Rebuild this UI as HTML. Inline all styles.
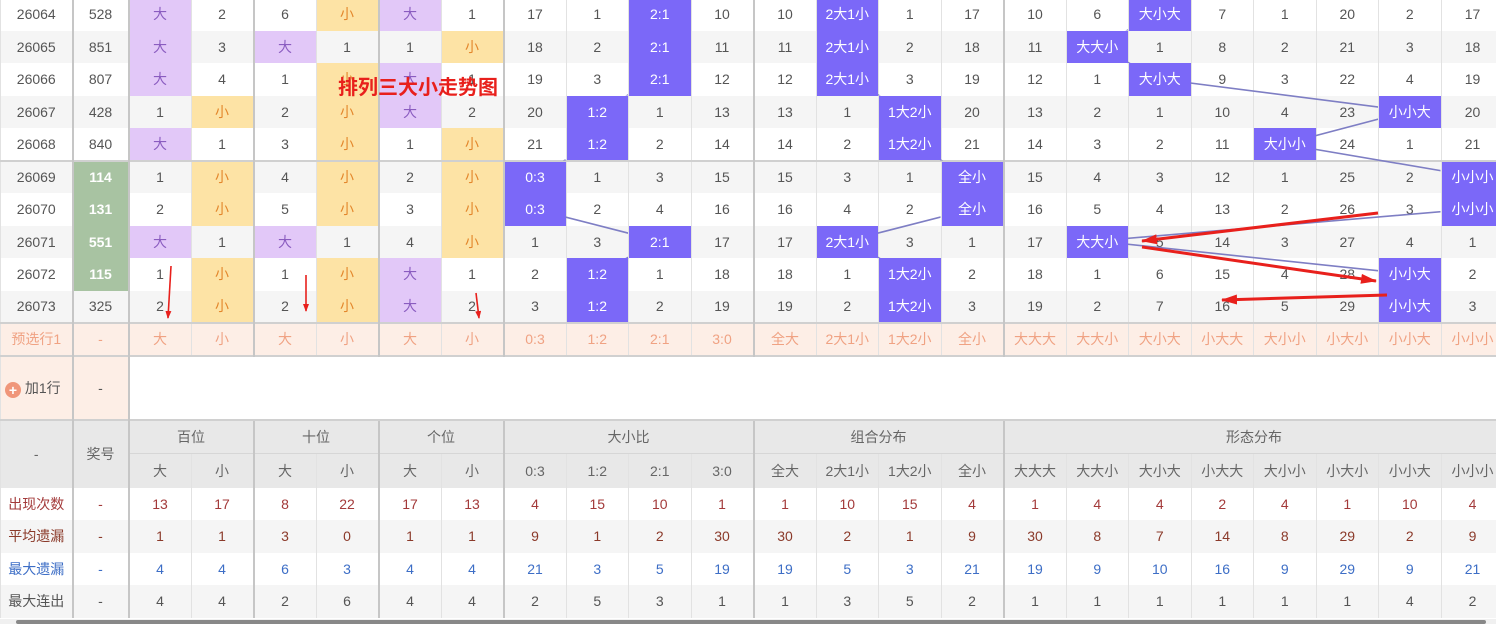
<!DOCTYPE html>
<html><head><meta charset="utf-8"><style>
*{margin:0;padding:0;box-sizing:border-box}
body{width:1496px;height:624px;overflow:hidden;background:#fff;font-family:"Liberation Sans","Noto Sans CJK SC",sans-serif;font-size:14px;color:#555;position:relative}
table{position:absolute;left:0;top:-2px;border-collapse:collapse;table-layout:fixed;width:1503px}
td{text-align:center;vertical-align:middle;height:32.5px;border-left:1px solid #e2e2e2;white-space:nowrap;overflow:hidden;padding:0}
tr.a td{background:#fff}
tr.b td{background:#f5f5f5}
td.g{border-left:2px solid #c6c6c6}
td.p{background:#e2c8f8!important;color:#8a5cc0}
td.y{background:#fde3a5!important;color:#e3862b}
td.d{background:#7b68f8!important;color:#fff}
td.gr{background:#a8c3a2!important;color:#fff;font-weight:bold}
tr.sep td{border-top:2px solid #d0d0d0}
tr.pre td{background:#fdeee6;color:#f0a283;border-top:2px solid #d0d0d0}
tr.add td{height:64px;border-top:2px solid #d0d0d0}
tr.h td{background:#e8e8e8;color:#666;height:34px}
tr.h1 td{border-top:2px solid #d0d0d0}
tr.h2 td{border-top:1px solid #d6d6d6}
.r1 td{color:#a33a3a}.r2 td{color:#8b3a2a}.r3 td{color:#3d6ec6}.r4 td{color:#555}
</style></head><body>
<table>
<colgroup><col style="width:72px"><col style="width:56px"><col span="22" style="width:62.5px"></colgroup>
<tr class="a"><td>26064</td><td class="g">528</td><td class="g p">大</td><td>2</td><td class="g">6</td><td class="y">小</td><td class="g p">大</td><td>1</td><td class="g">17</td><td>1</td><td class="d">2:1</td><td>10</td><td class="g">10</td><td class="d">2大1小</td><td>1</td><td>17</td><td class="g">10</td><td>6</td><td class="d">大小大</td><td>7</td><td>1</td><td>20</td><td>2</td><td>17</td></tr>
<tr class="b"><td>26065</td><td class="g">851</td><td class="g p">大</td><td>3</td><td class="g p">大</td><td>1</td><td class="g">1</td><td class="y">小</td><td class="g">18</td><td>2</td><td class="d">2:1</td><td>11</td><td class="g">11</td><td class="d">2大1小</td><td>2</td><td>18</td><td class="g">11</td><td class="d">大大小</td><td>1</td><td>8</td><td>2</td><td>21</td><td>3</td><td>18</td></tr>
<tr class="a"><td>26066</td><td class="g">807</td><td class="g p">大</td><td>4</td><td class="g">1</td><td class="y">小</td><td class="g p">大</td><td>1</td><td class="g">19</td><td>3</td><td class="d">2:1</td><td>12</td><td class="g">12</td><td class="d">2大1小</td><td>3</td><td>19</td><td class="g">12</td><td>1</td><td class="d">大小大</td><td>9</td><td>3</td><td>22</td><td>4</td><td>19</td></tr>
<tr class="b"><td>26067</td><td class="g">428</td><td class="g">1</td><td class="y">小</td><td class="g">2</td><td class="y">小</td><td class="g p">大</td><td>2</td><td class="g">20</td><td class="d">1:2</td><td>1</td><td>13</td><td class="g">13</td><td>1</td><td class="d">1大2小</td><td>20</td><td class="g">13</td><td>2</td><td>1</td><td>10</td><td>4</td><td>23</td><td class="d">小小大</td><td>20</td></tr>
<tr class="a"><td>26068</td><td class="g">840</td><td class="g p">大</td><td>1</td><td class="g">3</td><td class="y">小</td><td class="g">1</td><td class="y">小</td><td class="g">21</td><td class="d">1:2</td><td>2</td><td>14</td><td class="g">14</td><td>2</td><td class="d">1大2小</td><td>21</td><td class="g">14</td><td>3</td><td>2</td><td>11</td><td class="d">大小小</td><td>24</td><td>1</td><td>21</td></tr>
<tr class="b sep"><td>26069</td><td class="g gr">114</td><td class="g">1</td><td class="y">小</td><td class="g">4</td><td class="y">小</td><td class="g">2</td><td class="y">小</td><td class="g d">0:3</td><td>1</td><td>3</td><td>15</td><td class="g">15</td><td>3</td><td>1</td><td class="d">全小</td><td class="g">15</td><td>4</td><td>3</td><td>12</td><td>1</td><td>25</td><td>2</td><td class="d">小小小</td></tr>
<tr class="a"><td>26070</td><td class="g gr">131</td><td class="g">2</td><td class="y">小</td><td class="g">5</td><td class="y">小</td><td class="g">3</td><td class="y">小</td><td class="g d">0:3</td><td>2</td><td>4</td><td>16</td><td class="g">16</td><td>4</td><td>2</td><td class="d">全小</td><td class="g">16</td><td>5</td><td>4</td><td>13</td><td>2</td><td>26</td><td>3</td><td class="d">小小小</td></tr>
<tr class="b"><td>26071</td><td class="g gr">551</td><td class="g p">大</td><td>1</td><td class="g p">大</td><td>1</td><td class="g">4</td><td class="y">小</td><td class="g">1</td><td>3</td><td class="d">2:1</td><td>17</td><td class="g">17</td><td class="d">2大1小</td><td>3</td><td>1</td><td class="g">17</td><td class="d">大大小</td><td>5</td><td>14</td><td>3</td><td>27</td><td>4</td><td>1</td></tr>
<tr class="a"><td>26072</td><td class="g gr">115</td><td class="g">1</td><td class="y">小</td><td class="g">1</td><td class="y">小</td><td class="g p">大</td><td>1</td><td class="g">2</td><td class="d">1:2</td><td>1</td><td>18</td><td class="g">18</td><td>1</td><td class="d">1大2小</td><td>2</td><td class="g">18</td><td>1</td><td>6</td><td>15</td><td>4</td><td>28</td><td class="d">小小大</td><td>2</td></tr>
<tr class="b"><td>26073</td><td class="g">325</td><td class="g">2</td><td class="y">小</td><td class="g">2</td><td class="y">小</td><td class="g p">大</td><td>2</td><td class="g">3</td><td class="d">1:2</td><td>2</td><td>19</td><td class="g">19</td><td>2</td><td class="d">1大2小</td><td>3</td><td class="g">19</td><td>2</td><td>7</td><td>16</td><td>5</td><td>29</td><td class="d">小小大</td><td>3</td></tr>
<tr class="pre"><td>预选行1</td><td class="g">-</td><td class="g">大</td><td>小</td><td class="g">大</td><td>小</td><td class="g">大</td><td>小</td><td class="g">0:3</td><td>1:2</td><td>2:1</td><td>3:0</td><td class="g">全大</td><td>2大1小</td><td>1大2小</td><td>全小</td><td class="g">大大大</td><td>大大小</td><td>大小大</td><td>小大大</td><td>大小小</td><td>小大小</td><td>小小大</td><td>小小小</td></tr>
<tr class="add"><td style="background:#fdeee6;color:#555;text-align:left;padding-left:4px"><span style="display:inline-block;width:16px;height:16px;border-radius:50%;background:#f0967a;color:#fff;font-size:14px;line-height:16px;text-align:center;font-weight:bold;vertical-align:-2px">+</span> 加1行</td><td class="g" style="background:#fdeee6">-</td><td colspan="22" class="g" style="background:#fff"></td></tr>
<tr class="h h1"><td rowspan="2">-</td><td rowspan="2" class="g">奖号</td><td colspan="2" class="g">百位</td><td colspan="2" class="g">十位</td><td colspan="2" class="g">个位</td><td colspan="4" class="g">大小比</td><td colspan="4" class="g">组合分布</td><td colspan="8" class="g">形态分布</td></tr>
<tr class="h h2"><td class="g">大</td><td>小</td><td class="g">大</td><td>小</td><td class="g">大</td><td>小</td><td class="g">0:3</td><td>1:2</td><td>2:1</td><td>3:0</td><td class="g">全大</td><td>2大1小</td><td>1大2小</td><td>全小</td><td class="g">大大大</td><td>大大小</td><td>大小大</td><td>小大大</td><td>大小小</td><td>小大小</td><td>小小大</td><td>小小小</td></tr>
<tr class="a r1"><td>出现次数</td><td class="g">-</td><td class="g">13</td><td>17</td><td class="g">8</td><td>22</td><td class="g">17</td><td>13</td><td class="g">4</td><td>15</td><td>10</td><td>1</td><td class="g">1</td><td>10</td><td>15</td><td>4</td><td class="g">1</td><td>4</td><td>4</td><td>2</td><td>4</td><td>1</td><td>10</td><td>4</td></tr>
<tr class="b r2"><td>平均遗漏</td><td class="g">-</td><td class="g">1</td><td>1</td><td class="g">3</td><td>0</td><td class="g">1</td><td>1</td><td class="g">9</td><td>1</td><td>2</td><td>30</td><td class="g">30</td><td>2</td><td>1</td><td>9</td><td class="g">30</td><td>8</td><td>7</td><td>14</td><td>8</td><td>29</td><td>2</td><td>9</td></tr>
<tr class="a r3"><td>最大遗漏</td><td class="g">-</td><td class="g">4</td><td>4</td><td class="g">6</td><td>3</td><td class="g">4</td><td>4</td><td class="g">21</td><td>3</td><td>5</td><td>19</td><td class="g">19</td><td>5</td><td>3</td><td>21</td><td class="g">19</td><td>9</td><td>10</td><td>16</td><td>9</td><td>29</td><td>9</td><td>21</td></tr>
<tr class="b r4"><td>最大连出</td><td class="g">-</td><td class="g">4</td><td>4</td><td class="g">2</td><td>6</td><td class="g">4</td><td>4</td><td class="g">2</td><td>5</td><td>3</td><td>1</td><td class="g">1</td><td>3</td><td>5</td><td>2</td><td class="g">1</td><td>1</td><td>1</td><td>1</td><td>1</td><td>1</td><td>4</td><td>2</td></tr>
</table>
<div style="position:absolute;left:0;top:619px;width:1496px;height:5px;background:#f0f0f0"><div style="position:absolute;left:16px;top:1px;width:1470px;height:4px;background:#888;border-radius:2px"></div></div>
<svg width="1496" height="624" style="position:absolute;left:0;top:0" viewBox="0 0 1496 624">
<defs>
<marker id="ah" markerWidth="8" markerHeight="6" refX="7" refY="3" orient="auto" markerUnits="userSpaceOnUse"><path d="M0,0 L8,3 L0,6 Z" fill="#e8201c"/></marker>
<marker id="ah2" markerWidth="16" markerHeight="10" refX="15" refY="5" orient="auto" markerUnits="userSpaceOnUse"><path d="M0,0 L16,5 L0,10 Z" fill="#e8201c"/></marker>
<mask id="m" maskUnits="userSpaceOnUse" x="0" y="0" width="1496" height="624">
<rect x="0" y="0" width="1496" height="624" fill="#fff"/>
<g fill="#000">
<rect x="628" y="-2" width="62.5" height="97.5"/><rect x="565.5" y="95.5" width="62.5" height="65"/><rect x="503" y="160.5" width="62.5" height="65"/><rect x="628" y="225.5" width="62.5" height="32.5"/><rect x="565.5" y="258" width="62.5" height="65"/>
<rect x="815.5" y="-2" width="62.5" height="97.5"/><rect x="878" y="95.5" width="62.5" height="65"/><rect x="940.5" y="160.5" width="62.5" height="65"/><rect x="815.5" y="225.5" width="62.5" height="32.5"/><rect x="878" y="258" width="62.5" height="65"/>
<rect x="1128" y="-2" width="62.5" height="32.5"/><rect x="1065.5" y="30.5" width="62.5" height="32.5"/><rect x="1128" y="63" width="62.5" height="32.5"/><rect x="1378" y="95.5" width="62.5" height="32.5"/><rect x="1253" y="128" width="62.5" height="32.5"/><rect x="1440.5" y="160.5" width="62.5" height="65"/><rect x="1065.5" y="225.5" width="62.5" height="32.5"/><rect x="1378" y="258" width="62.5" height="65"/>
</g></mask>
</defs>
<g stroke="#7e7ec4" stroke-width="1.6" fill="none" mask="url(#m)">
<polyline points="659,14 659,46 659,79 597,111 597,144 534,176 534,209 659,241 597,274 597,306"/>
<polyline points="847,14 847,46 847,79 909,111 909,144 972,176 972,209 847,241 909,274 909,306"/>
<polyline points="1159,14 1097,46 1159,79 1409,111 1284,144 1472,176 1472,209 1097,241 1409,274 1409,306"/>
</g>
<g stroke="#e8201c" fill="none">
<line x1="1378" y1="213" x2="1142" y2="241" stroke-width="3" marker-end="url(#ah2)"/>
<line x1="1142" y1="247" x2="1376" y2="281" stroke-width="3" marker-end="url(#ah2)"/>
<line x1="1387" y1="295" x2="1222" y2="300" stroke-width="3" marker-end="url(#ah2)"/>
<line x1="171" y1="266" x2="168" y2="318" stroke-width="1.6" marker-end="url(#ah)"/>
<line x1="306" y1="275" x2="306" y2="311" stroke-width="1.6" marker-end="url(#ah)"/>
<line x1="476" y1="293" x2="479" y2="318" stroke-width="1.6" marker-end="url(#ah)"/>
</g>
<text x="338" y="94" font-family="Liberation Sans, Noto Sans CJK SC, sans-serif" font-size="20" font-weight="bold" fill="#e8201c">排列三大小走势图</text>
</svg>
</body></html>
